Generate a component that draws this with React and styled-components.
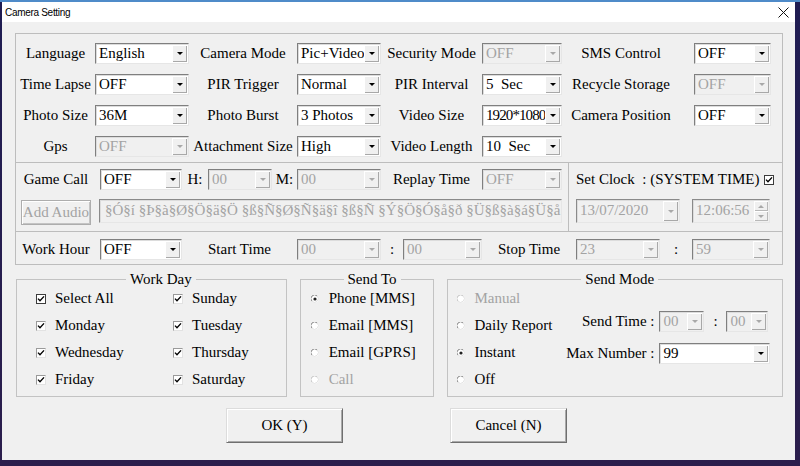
import React from "react";
import styled, { createGlobalStyle } from "styled-components";

const GlobalStyle = createGlobalStyle`
  html, body {
    margin: 0;
    padding: 0;
  }
  body {
    width: 800px;
    height: 466px;
    overflow: hidden;
    background: linear-gradient(180deg, #4f8bc9 0 2px, #1f1c52 2px, #2b1e4c 100%);
    font-family: "Liberation Serif", "Times New Roman", serif;
  }
`;

const Desktop = styled.div`
  width: 800px;
  height: 466px;
  padding: 2px 0 0 2px;
  box-sizing: border-box;
`;

const Window = styled.div`
  width: 793px;
  height: 458px;
  background: #f0f0f0;
  display: flex;
  flex-direction: column;
  color: #000;
`;

const TitleBar = styled.div`
  height: 20px;
  flex: none;
  background: #fff;
  display: flex;
  align-items: center;
  justify-content: space-between;
  padding: 0 6px 0 3px;
  font-family: "Liberation Sans", Arial, sans-serif;
  font-size: 10px;
  letter-spacing: -0.3px;
`;

const Body = styled.div`
  flex: 1;
  display: flex;
  flex-direction: column;
  padding: 11px 12px 0 13px;
`;

const MainGroup = styled.div`
  border: 1px solid #bdbdbd;
`;

const SettingsGrid = styled.div`
  display: grid;
  grid-template-columns: 79px 94px 108px 84px 101px 80px 132px 77px;
  grid-auto-rows: 21px;
  row-gap: 10px;
  padding: 9px 0 5px 0;
`;

const Label = styled.div`
  width: ${(p) => (p.$w ? `${p.$w}px` : "auto")};
  flex: none;
  display: flex;
  align-items: center;
  justify-content: ${(p) => p.$align || "center"};
  padding-right: ${(p) => p.$pr || 0}px;
  box-sizing: border-box;
  white-space: pre;
  font-size: 15px;
  color: ${(p) => (p.$off ? "#a3a3a3" : "#000")};
`;

const ComboBox = styled.div`
  width: ${(p) => p.$w}px;
  height: ${(p) => p.$h || 21}px;
  flex: none;
  margin-left: ${(p) => p.$ml || 0}px;
  box-sizing: border-box;
  display: flex;
  background: ${(p) => (p.$off ? "#f0f0f0" : "#fff")};
  border: 1px solid;
  border-color: #7f7f7f #e6e6e6 #e6e6e6 #7f7f7f;
  box-shadow: inset 1px 1px 0 #dcdcdc;
`;

const ComboText = styled.div`
  flex: 1;
  min-width: 0;
  overflow: hidden;
  white-space: pre;
  padding-left: ${(p) => p.$pl || 3}px;
  font-size: 15px;
  line-height: ${(p) => (p.$h || 21) - 3}px;
  letter-spacing: ${(p) => (p.$tight ? "-0.9px" : "0")};
  color: ${(p) => (p.$off ? "#a3a3a3" : "#000")};
`;

const DropBtn = styled.div`
  width: 15px;
  flex: none;
  margin: 1px 1px 1px 0;
  background: #f0f0f0;
  box-shadow: inset 1px 1px 0 #fff, inset -1px -1px 0 #a8a8a8;
  display: flex;
  align-items: center;
  justify-content: center;
`;

const Arrow = styled.span`
  width: 0;
  height: 0;
  border-left: 3px solid transparent;
  border-right: 3px solid transparent;
  border-${(p) => (p.$up ? "bottom" : "top")}: 3px solid ${(p) => (p.$off ? "#a8a8a8" : "#000")};
`;

const Combo = ({ w, h, value, off, tight, ml }) => (
  <ComboBox $w={w} $h={h} $off={off} $ml={ml}>
    <ComboText $off={off} $h={h} $tight={tight}>
      {value}
    </ComboText>
    <DropBtn>
      <Arrow $off={off} />
    </DropBtn>
  </ComboBox>
);

const MiddleBand = styled.div`
  display: flex;
  border-top: 1px solid #bdbdbd;
  border-bottom: 1px solid #bdbdbd;
`;

const GamePart = styled.div`
  width: 552px;
  display: flex;
  flex-direction: column;
  gap: 9px;
  padding: 6px 0;
`;

const ClockPart = styled.div`
  flex: 1;
  border-left: 1px solid #bdbdbd;
  padding: 6px 0 6px 7px;
  display: flex;
  flex-direction: column;
  gap: 9px;
`;

const Row = styled.div`
  display: flex;
  align-items: ${(p) => p.$items || "center"};
  height: ${(p) => p.$h || 21}px;
  padding-left: ${(p) => p.$pl || 0}px;
  gap: ${(p) => p.$gap || 0}px;
`;

const FlatButton = styled.div`
  width: ${(p) => p.$w}px;
  height: ${(p) => p.$h}px;
  margin-top: ${(p) => p.$mt || 0}px;
  box-sizing: border-box;
  flex: none;
  display: flex;
  align-items: center;
  justify-content: center;
  border: 1px solid #adadad;
  box-shadow: inset 1px 1px 0 #fff, inset -1px -1px 0 #c4c4c4;
  font-size: 15px;
  color: ${(p) => (p.$off ? "#a3a3a3" : "#000")};
  background: #f0f0f0;
`;

const TextField = styled.div`
  width: ${(p) => p.$w}px;
  height: ${(p) => p.$h || 24}px;
  box-sizing: border-box;
  flex: none;
  display: flex;
  overflow: hidden;
  border: 1px solid;
  border-color: #8a8a8a #e6e6e6 #e6e6e6 #8a8a8a;
  box-shadow: inset 1px 1px 0 #dcdcdc;
  background: #f0f0f0;
`;

const FieldText = styled.div`
  flex: 1;
  min-width: 0;
  overflow: hidden;
  white-space: pre;
  padding-left: ${(p) => p.$pl || 4}px;
  font-size: 15px;
  line-height: 21px;
  color: #a3a3a3;
`;

const SpinCol = styled.div`
  width: 14px;
  flex: none;
  margin: 1px 1px 1px 0;
  display: flex;
  flex-direction: column;
`;

const SpinBtn = styled.div`
  flex: 1;
  display: flex;
  align-items: center;
  justify-content: center;
  background: #f0f0f0;
  box-shadow: inset 1px 1px 0 #fff, inset -1px -1px 0 #b8b8b8;
`;

const WorkHourRow = styled.div`
  display: flex;
  align-items: center;
  height: 21px;
  padding: 7px 0 4px 0;
`;

const CheckBox = styled.span`
  width: 10px;
  height: 10px;
  flex: none;
  box-sizing: border-box;
  display: flex;
  align-items: center;
  justify-content: center;
  background: #fff;
  border: 1px solid;
  border-color: ${(p) => (p.$strong ? "#3c3c3c" : "#9a9a9a #e2e2e2 #e2e2e2 #9a9a9a")};
`;

const Check = ({ strong }) => (
  <CheckBox $strong={strong}>
    <svg width="8" height="8" viewBox="0 0 8 8">
      <path d="M1 3.6 L3 5.8 L7 1.4" fill="none" stroke="#000" strokeWidth="1.4" />
    </svg>
  </CheckBox>
);

const Radio = ({ on, off }) => (
  <svg width="8" height="8" viewBox="0 0 8 8" style={{ flex: "none" }}>
    <circle cx="4" cy="4" r="3.5" fill="#fff" />
    <path d="M1 6.2 A3.3 3.3 0 0 1 6.2 1" fill="none" stroke={off ? "#c6c6c6" : "#8a8a8a"} strokeWidth="1" />
    <path d="M6.2 1 A3.3 3.3 0 0 1 1 6.2" fill="none" stroke="#e4e4e4" strokeWidth="1" />
    {on && <circle cx="4" cy="4" r="1.6" fill="#222" />}
  </svg>
);

const LowerRow = styled.div`
  display: flex;
  gap: 13px;
  margin: 6px 0 0 1px;
`;

const Group = styled.fieldset`
  width: ${(p) => p.$w}px;
  height: 126px;
  box-sizing: border-box;
  margin: 0;
  padding: 0 0 3px ${(p) => p.$pl}px;
  min-width: 0;
  border: 1px solid #c3c3c3;
`;

const Legend = styled.legend`
  margin: 0 auto;
  padding: 0 4px;
  font-size: 15px;
  line-height: 16px;
`;

const DayGrid = styled.div`
  display: grid;
  grid-template-columns: 137px auto;
  grid-auto-rows: 27px;
  margin-top: -2px;
`;

const OptionList = styled.div`
  display: grid;
  grid-auto-rows: 27px;
  margin-top: -2px;
`;

const Option = styled.div`
  display: flex;
  align-items: center;
  gap: ${(p) => p.$gap || 9}px;
  font-size: 15px;
  white-space: nowrap;
  color: ${(p) => (p.$off ? "#a3a3a3" : "#000")};
`;

const ModeLayout = styled.div`
  display: grid;
  grid-template-columns: 112px auto;
`;

const ModeRight = styled.div`
  display: flex;
  flex-direction: column;
  gap: 11px;
  padding-top: 24px;
`;

const ButtonRow = styled.div`
  display: flex;
  justify-content: center;
  gap: 107px;
  margin-top: 11px;
  padding-right: 5px;
`;

const DialogButton = styled.button`
  width: 117px;
  height: 35px;
  padding: 0;
  font-family: "Liberation Serif", "Times New Roman", serif;
  font-size: 15px;
  color: #000;
  background: #f0f0f0;
  border: 1px solid;
  border-color: #dcdcdc #6f6f6f #6f6f6f #dcdcdc;
  box-shadow: inset 1px 1px 0 #fff, inset -1px -1px 0 #a9a9a9;
`;

const topRows = [
  ["Language", "English", "Camera Mode", "Pic+Video", "Security Mode", "OFF", "SMS Control", "OFF"],
  ["Time Lapse", "OFF", "PIR Trigger", "Normal", "PIR Interval", "5  Sec", "Recycle Storage", "OFF"],
  ["Photo Size", "36M", "Photo Burst", "3 Photos", "Video Size", "1920*1080", "Camera Position", "OFF"],
  ["Gps", "OFF", "Attachment Size", "High", "Video Length", "10  Sec", null, null],
];

const disabledTop = { "0-5": true, "1-7": true, "3-1": true };
const selectWidths = [94, 84, 80, 77];

const days = [
  ["Select All", true],
  ["Sunday"],
  ["Monday"],
  ["Tuesday"],
  ["Wednesday"],
  ["Thursday"],
  ["Friday"],
  ["Saturday"],
];

// garbled codepage text, clipped by the field like in the original
const garbled = "§Ó§í §Þ§à§Ø§Ö§ä§Ö §ß§Ñ§Ø§Ñ§ä§î §ß§Ñ §Ý§Ö§Ó§å§ð §Ü§ß§à§á§Ü§å §";

export default function App() {
  return (
    <>
      <GlobalStyle />
      <Desktop>
        <Window>
          <TitleBar>
            <span>Camera Setting</span>
            <svg width="11" height="11" viewBox="0 0 11 11">
              <path d="M0.5 0.5 L10.5 10.5 M10.5 0.5 L0.5 10.5" stroke="#111" strokeWidth="1" />
            </svg>
          </TitleBar>
          <Body>
            <MainGroup>
              <SettingsGrid>
                {topRows.map((row, r) =>
                  row.map((cell, c) => {
                    if (cell === null) return <div key={`${r}-${c}`} />;
                    if (c % 2 === 0)
                      return (
                        <Label key={`${r}-${c}`} $pr={c === 6 ? 14 : 0}>
                          {cell}
                        </Label>
                      );
                    return (
                      <Combo
                        key={`${r}-${c}`}
                        w={selectWidths[(c - 1) / 2]}
                        value={cell}
                        off={disabledTop[`${r}-${c}`]}
                        tight={cell === "1920*1080"}
                      />
                    );
                  })
                )}
              </SettingsGrid>

              <MiddleBand>
                <GamePart>
                  <Row>
                    <Label $w={80}>Game Call</Label>
                    <Combo w={82} value="OFF" ml={4} />
                    <Label $w={26}>H:</Label>
                    <Combo w={64} value="00" off />
                    <Label $w={25}>M:</Label>
                    <Combo w={84} value="00" off />
                    <Label $w={101}>Replay Time</Label>
                    <Combo w={80} value="OFF" off />
                  </Row>
                  <Row $h={26} $items="flex-start" $pl={5} $gap={8}>
                    <FlatButton $w={70} $h={25} $mt={1} $off>
                      Add Audio
                    </FlatButton>
                    <TextField $w={463}>
                      <FieldText $pl={5}>{garbled}</FieldText>
                    </TextField>
                  </Row>
                </GamePart>
                <ClockPart>
                  <Row $gap={5}>
                    <Label>{"Set Clock  : (SYSTEM TIME)"}</Label>
                    <Check strong />
                  </Row>
                  <Row $h={26} $items="flex-start" $gap={12}>
                    <TextField $w={104}>
                      <FieldText $pl={3}>13/07/2020</FieldText>
                      <DropBtn>
                        <Arrow $off />
                      </DropBtn>
                    </TextField>
                    <TextField $w={78}>
                      <FieldText $pl={3}>12:06:56</FieldText>
                      <SpinCol>
                        <SpinBtn>
                          <Arrow $up $off />
                        </SpinBtn>
                        <SpinBtn>
                          <Arrow $off />
                        </SpinBtn>
                      </SpinCol>
                    </TextField>
                  </Row>
                </ClockPart>
              </MiddleBand>

              <WorkHourRow>
                <Label $w={80}>Work Hour</Label>
                <Combo w={82} value="OFF" ml={4} />
                <Label $w={115}>Start Time</Label>
                <Combo w={84} value="00" off />
                <Label $w={22}>:</Label>
                <Combo w={79} value="00" off />
                <Label $w={94}>Stop Time</Label>
                <Combo w={84} value="23" off />
                <Label $w={32}>:</Label>
                <Combo w={78} value="59" off />
              </WorkHourRow>
            </MainGroup>

            <LowerRow>
              <Group $w={271} $pl={19}>
                <Legend>Work Day</Legend>
                <DayGrid>
                  {days.map(([name, strong]) => (
                    <Option key={name}>
                      <Check strong={strong} />
                      {name}
                    </Option>
                  ))}
                </DayGrid>
              </Group>

              <Group $w={135} $pl={10}>
                <Legend>Send To</Legend>
                <OptionList>
                  <Option $gap={10}>
                    <Radio on />
                    Phone [MMS]
                  </Option>
                  <Option $gap={10}>
                    <Radio />
                    Email [MMS]
                  </Option>
                  <Option $gap={10}>
                    <Radio />
                    Email [GPRS]
                  </Option>
                  <Option $gap={10} $off>
                    <Radio off />
                    Call
                  </Option>
                </OptionList>
              </Group>

              <Group $w={336} $pl={9}>
                <Legend>Send Mode</Legend>
                <ModeLayout>
                  <OptionList>
                    <Option $gap={9} $off>
                      <Radio off />
                      Manual
                    </Option>
                    <Option $gap={9}>
                      <Radio />
                      Daily Report
                    </Option>
                    <Option $gap={9}>
                      <Radio on />
                      Instant
                    </Option>
                    <Option $gap={9}>
                      <Radio />
                      Off
                    </Option>
                  </OptionList>
                  <ModeRight>
                    <Row>
                      <Label $w={85} $align="flex-end">
                        Send Time :
                      </Label>
                      <Combo w={45} value="00" off ml={5} />
                      <Label $w={22}>:</Label>
                      <Combo w={42} value="00" off />
                    </Row>
                    <Row>
                      <Label $w={85} $align="flex-end">
                        Max Number :
                      </Label>
                      <Combo w={111} value="99" ml={5} />
                    </Row>
                  </ModeRight>
                </ModeLayout>
              </Group>
            </LowerRow>

            <ButtonRow>
              <DialogButton>OK (Y)</DialogButton>
              <DialogButton>Cancel (N)</DialogButton>
            </ButtonRow>
          </Body>
        </Window>
      </Desktop>
    </>
  );
}
